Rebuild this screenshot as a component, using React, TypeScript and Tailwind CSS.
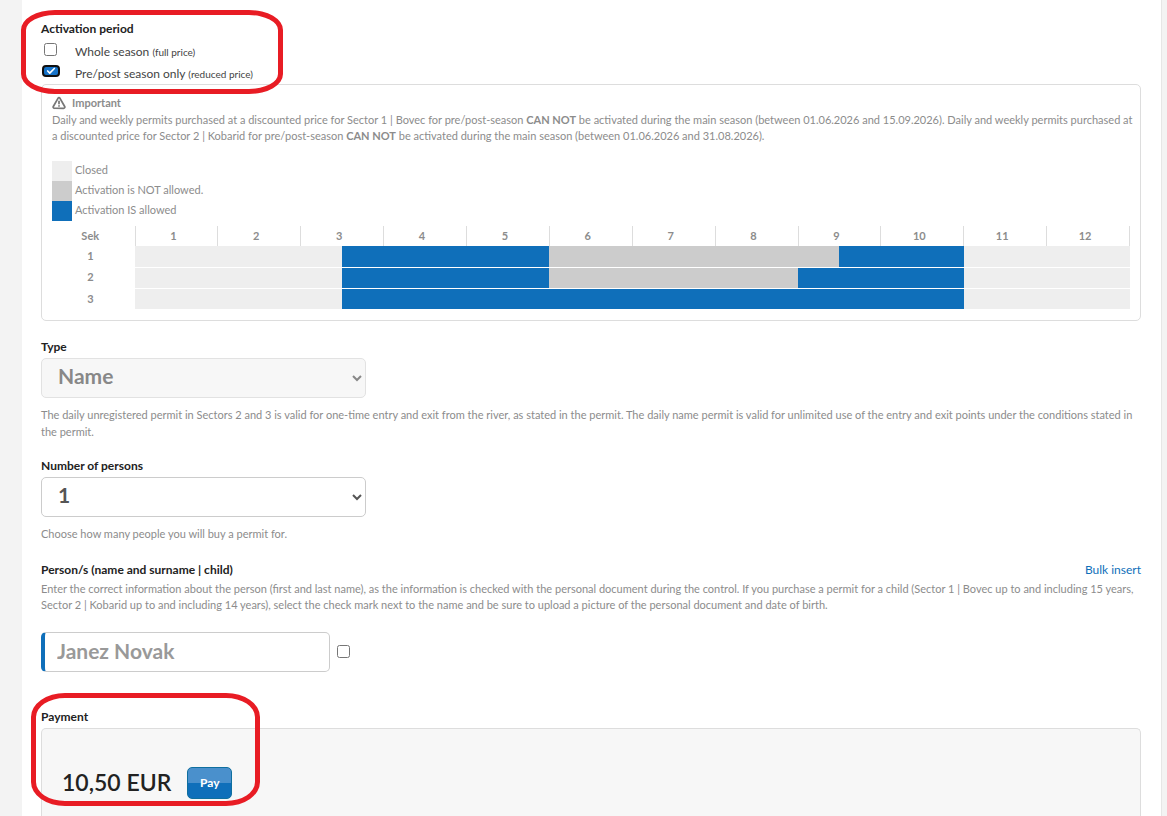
import type { ReactNode } from "react";
import { Check, TriangleAlert } from "lucide-react";

type Status = "closed" | "blocked" | "allowed";

interface Span {
  status: Status;
  halves: number; // length in half months
}

const STATUS_COLOR: Record<Status, string> = {
  closed: "bg-[#eeeeee]",
  blocked: "bg-[#cccccc]",
  allowed: "bg-[#0f6fba]",
};

const LEGEND: { status: Status; text: string }[] = [
  { status: "closed", text: "Closed" },
  { status: "blocked", text: "Activation is NOT allowed." },
  { status: "allowed", text: "Activation IS allowed" },
];

const MONTHS = [1, 2, 3, 4, 5, 6, 7, 8, 9, 10, 11, 12];
const HALVES = Array.from({ length: 24 }, (_, i) => i);

const SECTORS: { id: number; spans: Span[] }[] = [
  {
    id: 1,
    spans: [
      { status: "closed", halves: 5 },
      { status: "allowed", halves: 5 },
      { status: "blocked", halves: 7 },
      { status: "allowed", halves: 3 },
      { status: "closed", halves: 4 },
    ],
  },
  {
    id: 2,
    spans: [
      { status: "closed", halves: 5 },
      { status: "allowed", halves: 5 },
      { status: "blocked", halves: 6 },
      { status: "allowed", halves: 4 },
      { status: "closed", halves: 4 },
    ],
  },
  {
    id: 3,
    spans: [
      { status: "closed", halves: 5 },
      { status: "allowed", halves: 15 },
      { status: "closed", halves: 4 },
    ],
  },
];

function Title({ htmlFor, children }: { htmlFor?: string; children: ReactNode }) {
  const style = "block text-[12px] leading-[22px] font-bold text-[#222]";
  return htmlFor ? (
    <label htmlFor={htmlFor} className={style}>{children}</label>
  ) : (
    <h2 className={style}>{children}</h2>
  );
}

function SeasonChart() {
  return (
    <table className="mt-[5px] w-full table-fixed border-collapse text-[11px] font-bold">
      <colgroup>
        <col className="w-[83px]" />
        {HALVES.map((h) => (
          <col key={h} />
        ))}
      </colgroup>
      <thead>
        <tr className="h-5">
          <th className="p-0 pr-[6px]">Sek</th>
          {MONTHS.map((m) => (
            <th key={m} colSpan={2} className="border-l border-[#ddd] p-0 pr-[6px] last:border-r">
              {m}
            </th>
          ))}
        </tr>
      </thead>
      <tbody>
        {SECTORS.map((s) => (
          <tr key={s.id} className="h-[21px] border-t border-white first:border-t-0">
            <th className="p-0 pr-[6px]">{s.id}</th>
            {s.spans.map((span, i) => (
              <td key={i} colSpan={span.halves} className={`p-0 ${STATUS_COLOR[span.status]}`} />
            ))}
          </tr>
        ))}
      </tbody>
    </table>
  );
}

export default function App() {
  return (
    <div className="flex min-h-screen bg-[#f3f3f3] pr-[5px] pl-[22px] font-['Lato',sans-serif] text-[11px] text-[#8c8c8c]">
      <main className="flex flex-1 flex-col border-r border-[#e6e6e6] bg-white pt-[18px] pr-5 pl-[19px]">
        {/* Activation period */}
        <section className="relative">
          <Title>Activation period</Title>
          <div className="flex h-[22px] items-center">
            <input id="whole" type="checkbox" className="mb-1 ml-[3px] size-[13px]" />
            <label htmlFor="whole" className="ml-[18px] pt-[2px] text-[12px] text-[#444]">
              Whole season <span className="text-[10px]">(full price)</span>
            </label>
          </div>
          <div className="flex h-[22px] items-center">
            <span className="relative mb-1 ml-px flex">
              <input
                id="prepost"
                type="checkbox"
                defaultChecked
                className="peer h-3 w-[18px] appearance-none rounded border-2 border-[#101010] bg-white checked:bg-[#1673c9]"
              />
              <Check
                className="pointer-events-none absolute top-px left-1 hidden size-[10px] text-white peer-checked:block"
                strokeWidth={4}
              />
            </span>
            <label htmlFor="prepost" className="ml-[15px] pt-[2px] text-[12px] text-[#444]">
              Pre/post season only <span className="text-[10px]">(reduced price)</span>
            </label>
          </div>
          <div className="pointer-events-none absolute -top-2 -left-5 h-[84px] w-[262px] rounded-[34px/20px] border-[5px] border-[#e81c24]" />
        </section>

        <section className="rounded-[5px] border border-[#ddd] px-[10px] pt-[10px] pb-[11px]">
          <h3 className="flex items-center gap-[6px] leading-4 font-bold">
            <TriangleAlert className="size-[14px] text-[#777]" strokeWidth={3} />
            Important
          </h3>
          <p className="-mr-2 pt-px leading-4">
            Daily and weekly permits purchased at a discounted price for Sector 1 | Bovec for pre/post-season{" "}
            <b>CAN NOT</b> be activated during the main season (between 01.06.2026 and 15.09.2026). Daily and weekly
            permits purchased at a discounted price for Sector 2 | Kobarid for pre/post-season <b>CAN NOT</b> be
            activated during the main season (between 01.06.2026 and 31.08.2026).
          </p>
          <ul className="mt-[17px]">
            {LEGEND.map((item) => (
              <li key={item.status} className="flex h-5 gap-[3px] leading-[18px]">
                <span className={`size-5 ${STATUS_COLOR[item.status]}`} />
                {item.text}
              </li>
            ))}
          </ul>
          <SeasonChart />
        </section>

        {/* Permit type */}
        <section className="mt-[15px]">
          <Title htmlFor="type">Type</Title>
          <select
            id="type"
            disabled
            className="block h-10 w-[325px] rounded-[5px] border border-[#e2e2e2] bg-[#f7f7f7] pb-[6px] pl-3 text-[21px] font-bold text-[#888] opacity-100"
          >
            <option>Name</option>
          </select>
          <p className="mt-2 leading-[17px]">
            The daily unregistered permit in Sectors 2 and 3 is valid for one-time entry and exit from the river, as
            stated in the permit. The daily name permit is valid for unlimited use of the entry and exit points under
            the conditions stated in the permit.
          </p>
        </section>

        <section className="mt-[15px]">
          <Title htmlFor="persons">Number of persons</Title>
          <select
            id="persons"
            className="block h-10 w-[325px] rounded-[5px] border border-[#ccc] bg-white pb-[6px] pl-3 text-[21px] font-bold text-[#555]"
          >
            <option>1</option>
            <option>2</option>
            <option>3</option>
          </select>
          <p className="mt-2 leading-[17px]">Choose how many people you will buy a permit for.</p>
        </section>

        {/* Persons */}
        <section className="mt-[17px]">
          <div className="flex items-center justify-between">
            <Title htmlFor="person">Person/s (name and surname | child)</Title>
            <a href="#bulk" className="text-[12px] leading-[22px] text-[#0f6fba]">Bulk insert</a>
          </div>
          <p className="leading-4">
            Enter the correct information about the person (first and last name), as the information is checked with
            the personal document during the control. If you purchase a permit for a child (Sector 1 | Bovec up to and
            including 15 years, Sector 2 | Kobarid up to and including 14 years), select the check mark next to the name
            and be sure to upload a picture of the personal document and date of birth.
          </p>
          <div className="mt-[19px] flex items-center">
            <input
              id="person"
              type="text"
              placeholder="Janez Novak"
              className="h-10 w-[289px] rounded-[5px] border border-l-4 border-[#ccc] border-l-[#0f6fba] pb-1 pl-3 text-[21px] font-bold placeholder:text-[#999]"
            />
            <input type="checkbox" aria-label="Child" className="mb-[2px] ml-[7px] size-[13px]" />
          </div>
        </section>

        {/* Payment */}
        <section className="relative mt-[34px] flex flex-1 flex-col">
          <Title>Payment</Title>
          <div className="flex flex-1 items-start gap-4 rounded-t-[5px] border border-b-0 border-[#ddd] bg-[#f7f7f7] px-5 pt-[38px]">
            <span className="text-[23px] leading-[30px] font-semibold text-[#222]">10,50 EUR</span>
            <button className="h-8 w-[45px] rounded-[5px] border border-[#0f6f9f] bg-linear-to-b from-[#4a90cc] from-50% to-[#0f6fba] to-50% text-[12px] font-bold text-white">
              Pay
            </button>
          </div>
          <div className="pointer-events-none absolute -top-[13px] -left-[10px] h-[113px] w-[229px] rounded-[34px/24px] border-[5px] border-[#e81c24]" />
        </section>
      </main>
    </div>
  );
}
